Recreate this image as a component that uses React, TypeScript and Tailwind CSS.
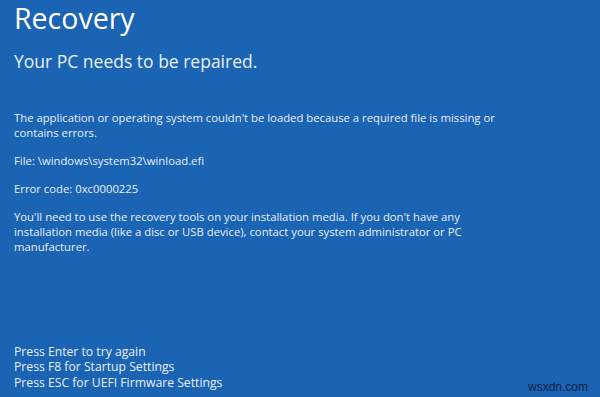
import React from 'react';

const font = { fontFamily: '"Open Sans", "Noto Sans", sans-serif' };

const App: React.FC = () => {
  return (
    <div
      className="relative flex h-[397px] w-[600px] flex-col overflow-hidden bg-[#1b63b3] px-[14px] text-[#e8f0fa]"
      style={font}
    >
      <h1 className="mt-[1px] text-[28.5px] leading-[34px] font-normal text-white">Recovery</h1>
      <h2 className="mt-[15px] text-[17.5px] leading-[22px] font-normal">Your PC needs to be repaired.</h2>

      <div className="mt-[38px] flex flex-col gap-[13px] text-[11.3px] leading-[15px]">
        <p className="w-[500px]">
          The application or operating system couldn't be loaded because a required file is missing or
          contains errors.
        </p>
        <p>File: \windows\system32\winload.efi</p>
        <p>Error code: 0xc0000225</p>
        <p className="w-[500px]">
          You'll need to use the recovery tools on your installation media. If you don't have any
          installation media (like a disc or USB device), contact your system administrator or PC
          manufacturer.
        </p>
      </div>

      <div className="flex-1" />

      <div className="mb-[7px] flex flex-col text-[12.2px] leading-[15.5px]">
        <p>Press Enter to try again</p>
        <p>Press F8 for Startup Settings</p>
        <p>Press ESC for UEFI Firmware Settings</p>
      </div>

      <span
        className="absolute right-[12px] bottom-[1px] text-[12px] text-[#0f1f45]"
        style={{ fontFamily: '"Liberation Sans", Arial, sans-serif' }}
      >
        wsxdn.com
      </span>
    </div>
  );
};

export default App;
